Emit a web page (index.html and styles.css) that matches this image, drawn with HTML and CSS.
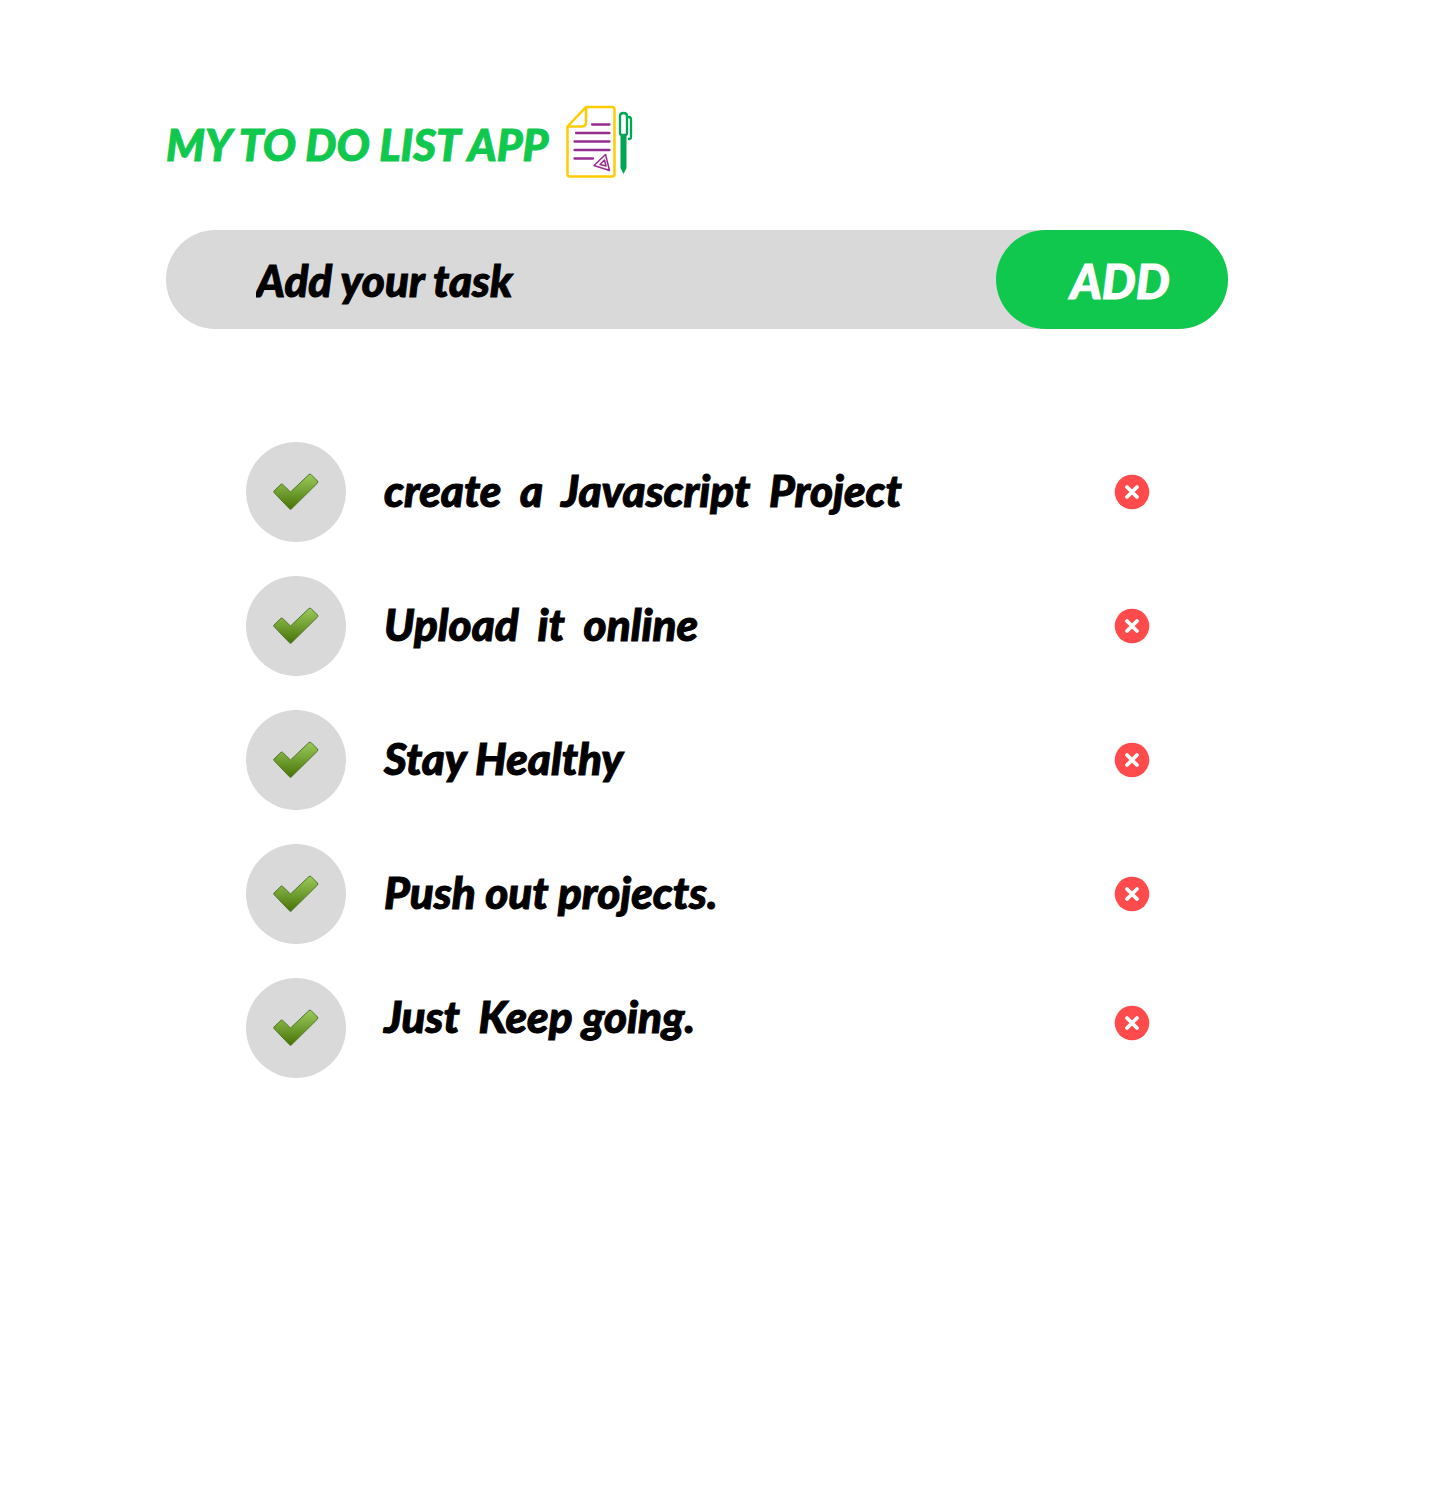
FILE: index.html
```html
<!DOCTYPE html>
<html lang="en">
<head>
<meta charset="utf-8">
<meta name="viewport" content="width=device-width, initial-scale=1">
<title>My To Do List App</title>
<link rel="stylesheet" href="styles.css">
</head>
<body>
<svg class="sprite" aria-hidden="true">
  <defs>
    <linearGradient id="leaf" x1="0" y1="0" x2="0" y2="1">
      <stop offset="0" stop-color="#9bcb5c"/>
      <stop offset="1" stop-color="#487306"/>
    </linearGradient>
    <symbol id="check" viewBox="0 0 46 38">
      <path d="M1 19.500 Q.3 18.700 1 18 L8 11.300 Q8.800 10.700 9.500 11.300 L17.500 19 L36 1.500 Q37 .8 38 1.500 L44.500 8 Q45.200 9 44.500 10 L18.500 35.800 Q17.500 36.800 16.500 35.800Z" fill="url(#leaf)" stroke="#50762a" stroke-width="1"/>
    </symbol>
    <symbol id="cross" viewBox="0 0 36 36">
      <circle cx="18" cy="18" r="17.300" fill="#ff4b4b"/>
      <path d="M13 13 23 23M23 13 13 23" stroke="#fff" stroke-width="3.800" stroke-linecap="round"/>
    </symbol>
  </defs>
</svg>
<main class="app">
  <header class="header">
    <h1 class="title">MY TO DO LIST APP</h1>
    <svg class="logo" viewBox="0 0 68 74" fill="none" stroke-linecap="round" stroke-linejoin="round" aria-hidden="true">
      <path d="M21 2H47Q49.500 2 49.500 4.500V69Q49.500 71.500 47 71.500H5Q2.500 71.500 2.500 69V21.500ZM21 2V17Q21 21.500 16.500 21.500H2.500" stroke="#fc0" stroke-width="2.500"/>
      <path d="M27 19.500H44.500M11 28H44.500M9.500 36.500H44.500M9.500 45H44.500M9.500 53.500H28" stroke="#962d91" stroke-width="2.300"/>
      <path d="M40.500 49.500 44.500 65.500 29 60.500ZM39.500 55 41 61 35 59.500Z" stroke="#962d91" stroke-width="1.500"/>
      <path d="M55 28V11Q55 8 58.500 8T62 11V28Q62 30 60 30H57Q55 30 55 28ZM62 12H64Q66 12 66 15V32Q66 34 64 34" stroke="#00a651" stroke-width="2.300"/>
      <path d="M55.500 30H61.500V63L58.500 69 55.500 63Z" fill="#00a651"/>
    </svg>
  </header>
  <form class="entry">
    <input class="entry-input" type="text" placeholder="Add your task" aria-label="Add your task">
    <button class="entry-add" type="button">ADD</button>
  </form>
  <ul class="tasks">
    <li class="task">
      <span class="tick"><input class="tick-box" type="checkbox" id="t1" checked><svg class="tick-mark" aria-hidden="true"><use href="#check"/></svg></span>
      <label class="task-name" for="t1">create  a  Javascript  Project</label>
      <button class="remove" type="button" aria-label="Remove task"><svg class="remove-icon"><use href="#cross"/></svg></button>
    </li>
    <li class="task">
      <span class="tick"><input class="tick-box" type="checkbox" id="t2" checked><svg class="tick-mark" aria-hidden="true"><use href="#check"/></svg></span>
      <label class="task-name" for="t2">Upload  it  online</label>
      <button class="remove" type="button" aria-label="Remove task"><svg class="remove-icon"><use href="#cross"/></svg></button>
    </li>
    <li class="task">
      <span class="tick"><input class="tick-box" type="checkbox" id="t3" checked><svg class="tick-mark" aria-hidden="true"><use href="#check"/></svg></span>
      <label class="task-name" for="t3">Stay Healthy</label>
      <button class="remove" type="button" aria-label="Remove task"><svg class="remove-icon"><use href="#cross"/></svg></button>
    </li>
    <li class="task">
      <span class="tick"><input class="tick-box" type="checkbox" id="t4" checked><svg class="tick-mark" aria-hidden="true"><use href="#check"/></svg></span>
      <label class="task-name" for="t4">Push out projects.</label>
      <button class="remove" type="button" aria-label="Remove task"><svg class="remove-icon"><use href="#cross"/></svg></button>
    </li>
    <li class="task task-last">
      <span class="tick"><input class="tick-box" type="checkbox" id="t5" checked><svg class="tick-mark" aria-hidden="true"><use href="#check"/></svg></span>
      <label class="task-name" for="t5">Just  Keep going.</label>
      <button class="remove" type="button" aria-label="Remove task"><svg class="remove-icon"><use href="#cross"/></svg></button>
    </li>
  </ul>
</main>
</body>
</html>
```
FILE: styles.css
```css
* { box-sizing: border-box; }
body {
  margin: 0;
  background: #fff;
  color: #000;
  font-family: Lato, "Open Sans", sans-serif;
  font-style: italic;
  font-weight: 900;
  -webkit-text-stroke: 1px currentColor;
}
input, button { font: inherit; border: 0; padding: 0; margin: 0; }
button { cursor: pointer; }
.sprite { position: absolute; width: 0; height: 0; }
.app { padding: 105px 212px 105px 166px; }
.header { display: flex; align-items: center; gap: 16px; }
.title {
  margin: 0;
  padding-top: 4px;
  color: #11c84e;
  font-size: 44px;
  font-weight: 900;
  line-height: 56px;
  white-space: nowrap;
}
.logo { width: 68px; height: 74px; flex: none; }
.entry {
  display: flex;
  height: 99px;
  margin-top: 51px;
  border-radius: 50px;
  background: #d9d9d9;
}
.entry-input {
  flex: 1;
  min-width: 0;
  padding-left: 90px;
  border-radius: 50px;
  background: transparent;
  font-size: 44px;
}
.entry-input::placeholder { color: #000; opacity: 1; }
.entry-add {
  width: 232px;
  padding: 2px 0 0 16px;
  border-radius: 50px;
  background: #11c84e;
  color: #fff;
  font-size: 48px;
}
.tasks {
  display: flex;
  flex-direction: column;
  gap: 34px;
  margin: 113px 0 0;
  padding: 0 78px 0 80px;
  list-style: none;
}
.task { display: flex; align-items: center; }
.tick { display: grid; place-items: center; flex: none; }
.tick-box {
  grid-area: 1 / 1;
  appearance: none;
  width: 100px;
  height: 100px;
  border-radius: 50%;
  background: #d9d9d9;
}
.tick-mark { grid-area: 1 / 1; width: 46px; height: 38px; pointer-events: none; }
.tick-box:not(:checked) + .tick-mark { visibility: hidden; }
.task-name {
  flex: 1;
  padding: 0 0 4px 38px;
  font-size: 44px;
  line-height: 48px;
  white-space: pre-wrap;
}
.task-last .task-name { padding-bottom: 24px; }
.remove { flex: none; width: 36px; height: 36px; border-radius: 50%; background: transparent; }
.remove-icon { display: block; width: 36px; height: 36px; }
.task-last .remove { margin-bottom: 10px; }
```
